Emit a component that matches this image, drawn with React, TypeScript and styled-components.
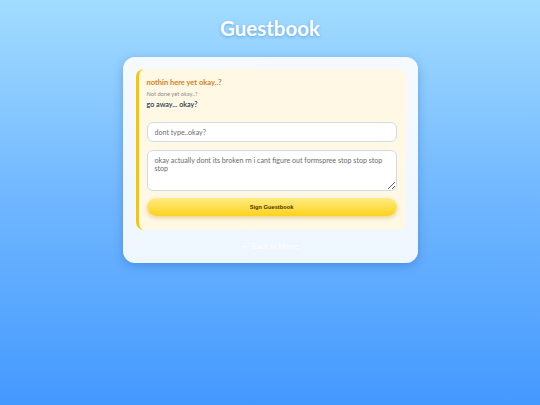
import React from "react";
import styled, { createGlobalStyle } from "styled-components";

const GlobalStyle = createGlobalStyle`
  html, body {
    margin: 0;
    padding: 0;
  }
  body {
    font-family: Lato, "Noto Sans", sans-serif;
    background: #4499ff;
    min-height: 405px;
  }
`;

const Page = styled.div`
  min-height: 405px;
  display: flex;
  flex-direction: column;
  align-items: center;
  background: linear-gradient(to bottom, #a2dcff 0%, #6fb6ff 50%, #4499ff 100%);
`;

const Title = styled.h1`
  margin: 16px 0 17px;
  font-size: 20.5px;
  line-height: 24px;
  font-weight: bold;
  color: #ffffff;
  text-shadow: 0 1px 3px rgba(40, 110, 180, 0.45);
`;

const Card = styled.div`
  width: 295px;
  box-sizing: border-box;
  padding: 12px 12px 11px 13px;
  border-radius: 12px;
  background: linear-gradient(to bottom, #f4faff, #eef6ff);
  box-shadow: 0 3px 10px rgba(30, 90, 170, 0.35);
  display: flex;
  flex-direction: column;
`;

const Panel = styled.div`
  padding: 9px 9px 14px 8px;
  border-left: 3px solid #f6c700;
  border-radius: 8px;
  background: #fff8e5;
  display: flex;
  flex-direction: column;
`;

const Heading = styled.div`
  font-size: 7.5px;
  line-height: 10px;
  font-weight: bold;
  color: #d57f22;
`;

const Note = styled.div`
  margin-top: 2px;
  font-size: 5.7px;
  line-height: 8px;
  color: #8a8a8a;
`;

const Message = styled.div`
  margin-top: 2px;
  font-size: 7.2px;
  line-height: 10px;
  font-weight: 600;
  color: #26384c;
`;

const Field = styled.input`
  margin-top: 12px;
  height: 20px;
  box-sizing: border-box;
  padding: 0 7px;
  border: 1px solid #cfdbe6;
  border-radius: 6px;
  background: #ffffff;
  font-family: inherit;
  font-size: 7.1px;
  color: #333;
  outline: none;
  &::placeholder {
    color: #6c6c6c;
  }
`;

const Area = styled.textarea`
  margin-top: 8px;
  height: 41px;
  box-sizing: border-box;
  padding: 5.5px 7px;
  border: 1px solid #cfdbe6;
  border-radius: 6px;
  background: #ffffff;
  font-family: inherit;
  font-size: 7.1px;
  line-height: 8.5px;
  color: #333;
  resize: vertical;
  outline: none;
  &::placeholder {
    color: #6c6c6c;
  }
`;

const SignButton = styled.button`
  margin-top: 7px;
  height: 18px;
  border: none;
  border-radius: 9px;
  background: linear-gradient(to bottom, #ffeb85 0%, #ffd21c 100%);
  box-shadow: 0 2px 4px rgba(190, 140, 0, 0.35);
  font-family: "Liberation Sans", Arial, sans-serif;
  font-size: 5.7px;
  font-weight: bold;
  color: #4a3600;
  cursor: pointer;
`;

const BackLink = styled.a`
  margin-top: 12px;
  align-self: center;
  font-size: 7.4px;
  line-height: 10px;
  font-weight: bold;
  color: #ffffff;
  text-decoration: none;
  opacity: 0.9;
`;

export default function App() {
  return (
    <>
      <GlobalStyle />
      <Page>
        <Title>Guestbook</Title>
        <Card>
          <Panel>
            <Heading>nothin here yet okay..?</Heading>
            <Note>Not done yet okay..?</Note>
            <Message>go away... okay?</Message>
            <Field type="text" placeholder="dont type..okay?" />
            <Area placeholder="okay actually dont its broken rn i cant figure out formspree stop stop stop stop" />
            <SignButton type="button">Sign Guestbook</SignButton>
          </Panel>
          <BackLink href="#">← Back to Home</BackLink>
        </Card>
      </Page>
    </>
  );
}
